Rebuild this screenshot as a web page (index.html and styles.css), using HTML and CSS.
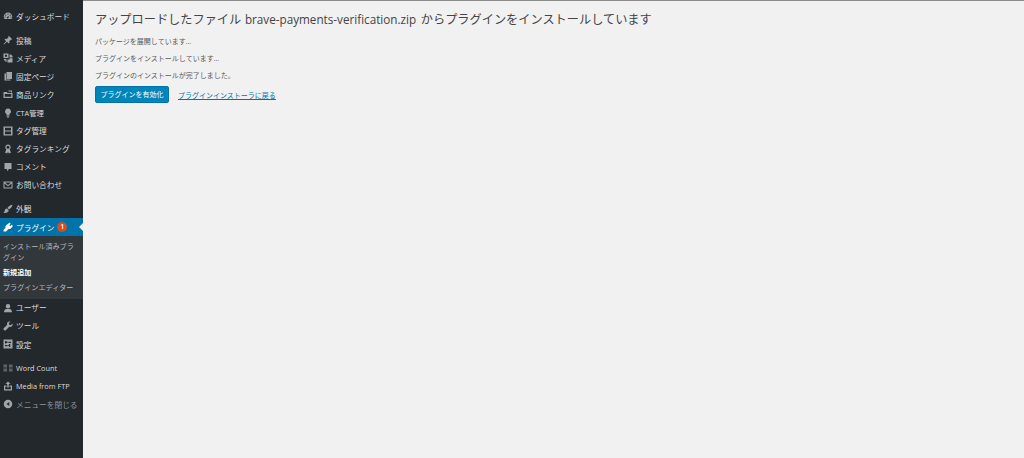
FILE: index.html
```html
<!DOCTYPE html>
<html lang="ja">
<head>
<meta charset="utf-8">
<title>プラグインのインストール</title>
<link rel="stylesheet" href="styles.css">
</head>
<body>
<div class="shell">
<nav class="side">
  <ul class="menu">
    <li class="item"><svg class="ic" viewBox="0 0 20 20"><path fill-rule="evenodd" d="M10 3a8.500 8.500 0 0 0-8.500 8.500c0 1.800.5 3.300 1.300 4.500h14.400c.8-1.200 1.300-2.700 1.300-4.500A8.500 8.500 0 0 0 10 3zm0 2a1.200 1.200 0 1 1 0 2.400A1.200 1.200 0 0 1 10 5zM5.500 7a1.200 1.200 0 1 1 0 2.400 1.200 1.200 0 0 1 0-2.400zm9 0a1.200 1.200 0 1 1 0 2.400 1.200 1.200 0 0 1 0-2.400zM4 11a1.200 1.200 0 1 1 0 2.400A1.200 1.200 0 0 1 4 11zm12 0a1.200 1.200 0 1 1 0 2.400 1.200 1.200 0 0 1 0-2.400zm-2.500-2.500L11 12.200a1.800 1.800 0 1 1-1.300-.9z"/></svg><span>ダッシュボード</span></li>
    <li class="item sep"><svg class="ic" viewBox="0 0 20 20"><path d="M11.500 1.500l7 7-1.500 1-1-.5-3.500 3.500.5 3-1.500 1.500-3.500-3.500L2 19l-1-1 5.500-5.500L3 9l1.500-1.500 3 .5L11 4.500l-.5-1z"/></svg><span>投稿</span></li>
    <li class="item"><svg class="ic" viewBox="0 0 20 20"><path fill-rule="evenodd" d="M1 1h10v9H1zm3 2.500v4h4v-4zM13 3h3l3 3v3h-6zM13 10.500h6V19H9v-6h4zM2 12h5v6H5v-3H2z"/></svg><span>メディア</span></li>
    <li class="item"><svg class="ic" viewBox="0 0 20 20"><path d="M7 2h11v14H7zM3 5h3v12h9v2H3z"/></svg><span>固定ページ</span></li>
    <li class="item"><svg class="ic" viewBox="0 0 20 20"><path fill-rule="evenodd" d="M1 6h7l1 2h10v10H1zm2.500 4v5.500h13V10zM11 3h7v4h-2V5h-5z"/></svg><span>商品リンク</span></li>
    <li class="item"><svg class="ic" viewBox="0 0 20 20"><path d="M10 1a6 6 0 0 0-3 11.200V14h6v-1.800A6 6 0 0 0 10 1zM7 15h6v2H7zm1 2.500h4V19H8z"/></svg><span class="lat">CTA管理</span></li>
    <li class="item"><svg class="ic" viewBox="0 0 20 20"><path fill-rule="evenodd" d="M1 1h18v18H1zm3 2.500V9h12V3.500zM4 11v5.500h12V11z"/></svg><span>タグ管理</span></li>
    <li class="item"><svg class="ic" viewBox="0 0 20 20"><path fill-rule="evenodd" d="M10 1a5.500 5.500 0 0 1 3.500 9.700L16 18.500l-3-1-1.200 2L10 15.500l-1.800 4-1.200-2-3 1 2.500-7.800A5.500 5.500 0 0 1 10 1zm0 2.500a3 3 0 1 0 0 6 3 3 0 0 0 0-6z"/></svg><span>タグランキング</span></li>
    <li class="item"><svg class="ic" viewBox="0 0 20 20"><path d="M3 2h14v12h-5l-4 4.500V14H3z"/></svg><span>コメント</span></li>
    <li class="item"><svg class="ic" viewBox="0 0 20 20"><path fill-rule="evenodd" d="M1 3h18v14H1zm3 2l6 5 6-5zM3 7v8h14V7l-7 5.500z"/></svg><span>お問い合わせ</span></li>
    <li class="item sep"><svg class="ic" viewBox="0 0 20 20"><path d="M19 1.500c-3.500 0-8 3.500-10 6.500l3 3c3-2 7-6 7-9.500zM8 9c-3.500 0-4.500 2.500-4.500 4.500 0 1.500-1 3-2.500 4 4.500 1 9.500 0 10.500-4.500z"/></svg><span>外観</span></li>
    <li class="item current"><svg class="ic" viewBox="0 0 20 20"><path d="M13 1l2.500 2.500-3 3 2 2 3-3L20 8l-4.500 5c-1 1-3 1.500-4.500 1L6 19H1v-3l4-4.500c-.5-1.500 0-3.500 1-4.500z"/></svg><span>プラグイン</span><b class="badge">1</b></li>
    <li>
      <ul class="sub">
        <li>インストール済みプラグイン</li>
        <li class="on">新規追加</li>
        <li>プラグインエディター</li>
      </ul>
    </li>
    <li class="item"><svg class="ic" viewBox="0 0 20 20"><path d="M10 2a4.500 4.500 0 1 1 0 9 4.500 4.500 0 0 1 0-9zM2 18.500c0-4.500 2.500-6.500 5-6.500h6c2.500 0 5 2 5 6.500z"/></svg><span>ユーザー</span></li>
    <li class="item"><svg class="ic" viewBox="0 0 20 20"><path d="M19 5l-3.500 3.500-3-1-1-3L15 1c-3.500-.7-7 1-7 4.500 0 .8.200 1.500.4 2L1 15v2l2 2h2l7.500-7.500c3.500 1.200 8-1 6.500-6.500z"/></svg><span>ツール</span></li>
    <li class="item"><svg class="ic" viewBox="0 0 20 20"><path fill-rule="evenodd" d="M1 1h18v18H1zm3 3v5h2.500V8H9V5H6.500V4zm7 1.500v2.500h5V5.500zM4 12v2.500h5V12zm8-2v1.500h-1.500V14H12v2h2.500v-6z"/></svg><span>設定</span></li>
    <li class="item sep dim"><svg class="ic" viewBox="0 0 20 20"><path d="M1 3h7v6H1zM12 3h7v6h-7zM1 11h7v6H1zM12 11h7v6h-7z"/></svg><span class="lat">Word Count</span></li>
    <li class="item"><svg class="ic" viewBox="0 0 20 20"><path d="M10 1l5 5h-3.500v7h-3V6H5zM2 9h5v2.500H4.500v5h11v-5H13V9h5v10H2z"/></svg><span class="lat">Media from FTP</span></li>
    <li class="item close"><svg class="ic" viewBox="0 0 20 20"><path fill-rule="evenodd" d="M10 1.500a8.500 8.500 0 1 1 0 17 8.500 8.500 0 0 1 0-17zM12.500 6L7 10l5.500 4z"/></svg><span>メニューを閉じる</span></li>
  </ul>
</nav>
<main class="content">
  <h1>アップロードしたファイル <span class="file">brave-payments-verification.zip</span> からプラグインをインストールしています</h1>
  <p>パッケージを展開しています...</p>
  <p>プラグインをインストールしています...</p>
  <p class="last">プラグインのインストールが完了しました。</p>
  <div class="actions">
    <a class="btn">プラグインを有効化</a>
    <a class="back">プラグインインストーラに戻る</a>
  </div>
</main>
</div>
</body>
</html>
```
FILE: styles.css
```css
* { box-sizing: border-box; }
html, body { margin: 0; height: 100%; }
body {
  background: #f1f1f1;
  font-family: "Open Sans", "Noto Sans CJK JP", sans-serif;
  color: #444;
  overflow: hidden;
}
.shell { display: flex; height: 458px; }
.side { width: 83px; background: #23282d; flex: none; }
.menu, .sub { list-style: none; margin: 0; padding: 0; }
.menu { padding-top: 7px; }
.item {
  display: flex;
  align-items: center;
  height: 18.1px;
  padding-left: 2px;
  font-size: 7.7px;
  color: #dcdddf;
  white-space: nowrap;
}
.item.sep { margin-top: 6px; }
.lat { font-size: 7.3px; }
.ic { width: 10px; height: 10px; fill: #a0a5aa; flex: none; margin: 0 3.5px 0 .5px; }
.current { background: #0073aa; color: #fff; position: relative; }
.current .ic { fill: #fff; }
.current::after {
  content: "";
  position: absolute;
  right: 0;
  top: 5px;
  border: 4px solid transparent;
  border-right-color: #f1f1f1;
  border-left-width: 0;
}
.badge {
  width: 10px;
  height: 10px;
  margin-left: 3px;
  border-radius: 50%;
  background: #d54e21;
  color: #fff;
  font-size: 6.500px;
  line-height: 10px;
  text-align: center;
  font-weight: 600;
}
.sub {
  display: flex;
  flex-direction: column;
  gap: 4px;
  height: 62.7px;
  background: #32373c;
  padding: 4.800px 5px 0 3px;
}
.sub li {
  font-size: 7.1px;
  line-height: 11px;
  color: #b4b9be;
}
.sub li.on { color: #fff; font-weight: 700; }
.close { color: #8f9499; }
.dim .ic { fill: #5f6468; }
.content { flex: 1; border-top: 1px solid #8c8c8c; padding: 11px 0 0 12px; }
h1 {
  margin: 0 0 10px;
  font-size: 12.200px;
  line-height: 15px;
  font-weight: 400;
  color: #444;
  white-space: nowrap;
}
.file { font-size: 11.700px; margin: 0 1.500px 0 .5px; }
p {
  margin: 0 0 7px;
  font-size: 7px;
  line-height: 10px;
  color: #5a5a5a;
}
p.last { margin-bottom: 5px; }
.actions { display: flex; align-items: center; }
.btn {
  display: block;
  width: 74px;
  height: 17px;
  background: #0085ba;
  border: 1px solid #0073aa;
  border-radius: 2px;
  color: #fff;
  font-size: 7px;
  line-height: 15px;
  text-align: center;
}
.back {
  margin-left: 9px;
  color: #0073aa;
  font-size: 7px;
  text-decoration: underline;
}
```
